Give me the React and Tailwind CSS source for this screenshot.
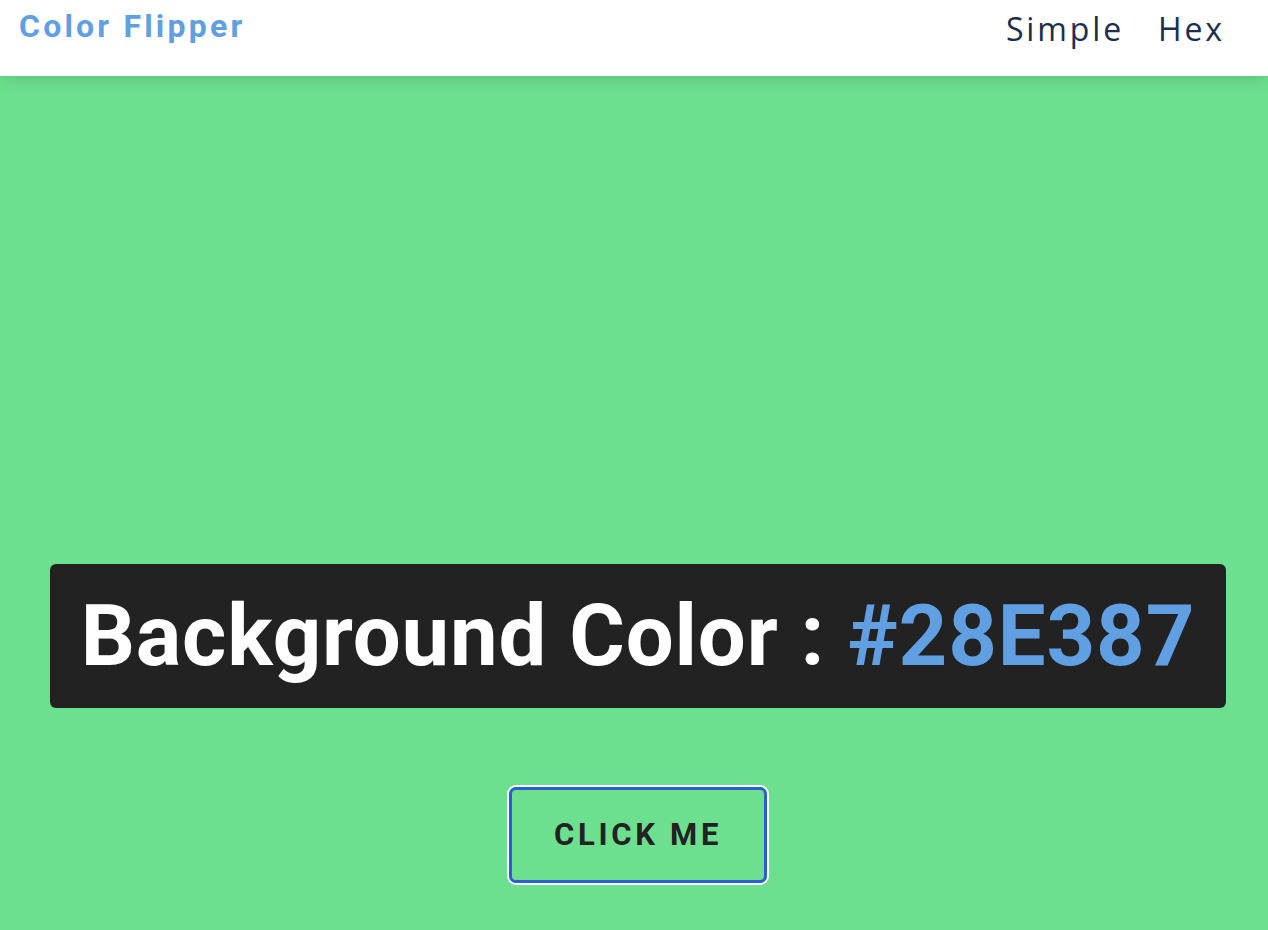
import React, { useState } from 'react';

const App = () => {
  const [color] = useState('#28E387');

  return (
    <div className="min-h-screen bg-[#6de08f] font-['Roboto',sans-serif]">
      <nav className="relative z-10 h-[76px] bg-white shadow-[0_4px_16px_rgba(0,0,0,0.12)] flex items-start justify-between pl-[19px] pr-[43px]">
        <h4 className="pt-[6px] text-[32px] font-bold tracking-[0.1em] text-[#5f9fe2] leading-[40px]">Color Flipper</h4>
        <ul className="flex gap-[34px] pt-[9px] font-['Open_Sans',sans-serif] text-[32px] tracking-[0.09em] text-[#1a2f4e] leading-[40px]">
          <li>Simple</li>
          <li>Hex</li>
        </ul>
      </nav>

      <main className="flex flex-col items-center pl-[8px] pt-[488px] pb-[47px]">
        <div className="w-[1176px] h-[144px] bg-[#222222] rounded-[6px] flex items-center justify-center">
          <h2 className="whitespace-nowrap text-[85px] font-bold tracking-[0.01em] text-white leading-none">
            Background Color : <span className="text-[#5f9fe2]">{color}</span>
          </h2>
        </div>
        <button className="mt-[79px] w-[258px] h-[96px] rounded-[7px] border-[3px] border-[#2c5ecf] shadow-[0_0_0_2px_#ffffff] bg-transparent text-[#222222] text-[31px] font-bold tracking-[0.12em] uppercase">
          Click Me
        </button>
      </main>
    </div>
  );
};

export default App;
